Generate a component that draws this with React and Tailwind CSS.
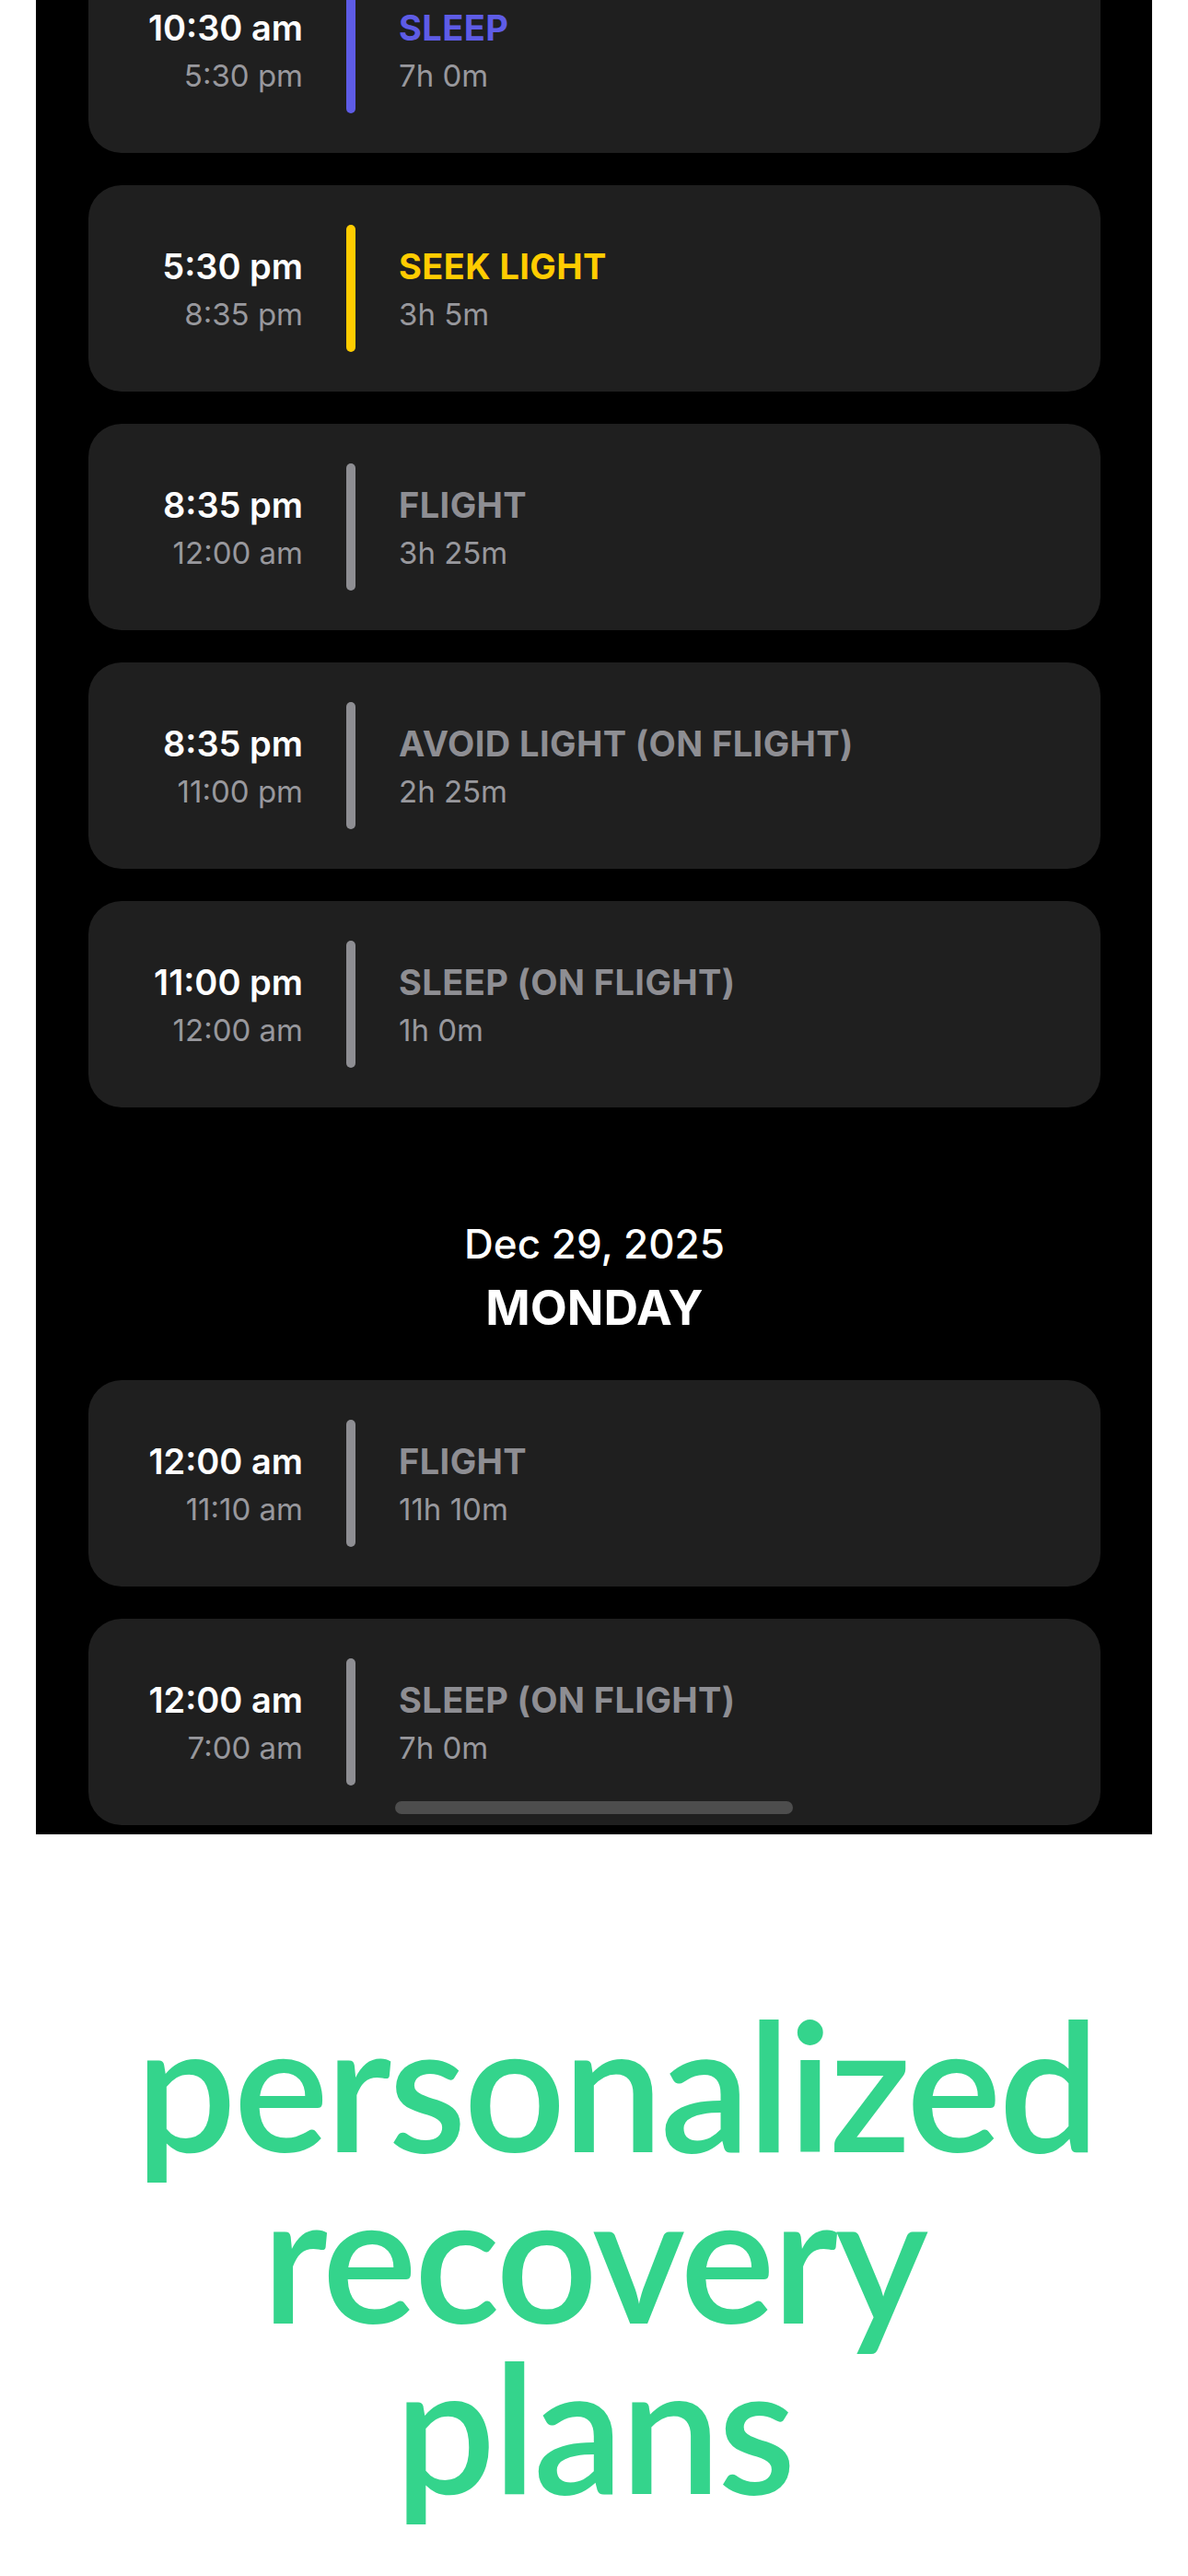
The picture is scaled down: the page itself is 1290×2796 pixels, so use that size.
const dayOne = [
  { start: "10:30 am", end: "5:30 pm", title: "SLEEP", length: "7h 0m", tone: "sleep" },
  { start: "5:30 pm", end: "8:35 pm", title: "SEEK LIGHT", length: "3h 5m", tone: "light" },
  { start: "8:35 pm", end: "12:00 am", title: "FLIGHT", length: "3h 25m", tone: "muted" },
  { start: "8:35 pm", end: "11:00 pm", title: "AVOID LIGHT (ON FLIGHT)", length: "2h 25m", tone: "muted" },
  { start: "11:00 pm", end: "12:00 am", title: "SLEEP (ON FLIGHT)", length: "1h 0m", tone: "muted" },
];

const dayTwo = [
  { start: "12:00 am", end: "11:10 am", title: "FLIGHT", length: "11h 10m", tone: "muted" },
  { start: "12:00 am", end: "7:00 am", title: "SLEEP (ON FLIGHT)", length: "7h 0m", tone: "muted" },
];

const barColors = {
  sleep: "bg-[#5e5ce6]",
  light: "bg-[#ffcc00]",
  muted: "bg-[#8e8e93]",
};

const titleColors = {
  sleep: "text-[#5e5ce6]",
  light: "text-[#ffcc00]",
  muted: "text-[#8e8e93]",
};

function EventCard({ item }) {
  return (
    <div className="flex h-[224px] shrink-0 items-center gap-[47px] rounded-[36px] bg-[#1f1f1f]">
      {/* start / end */}
      <div className="w-[233px] pt-[3px] text-right">
        <div className="text-[38px] font-semibold leading-[52px] text-white">{item.start}</div>
        <div className="text-[33px] leading-[52px] text-[#98989d]">{item.end}</div>
      </div>

      <div className={`h-[138px] w-[10px] rounded-full ${barColors[item.tone]}`} />

      <div className="pt-[3px]">
        <div className={`text-[38px] font-bold leading-[52px] tracking-[0.4px] ${titleColors[item.tone]}`}>
          {item.title}
        </div>
        <div className="text-[33px] leading-[52px] text-[#98989d]">{item.length}</div>
      </div>
    </div>
  );
}

export default function App() {
  return (
    <div className="min-h-[2796px] w-[1290px] bg-white" style={{ fontFamily: "Inter, 'Noto Sans', sans-serif" }}>
      {/* Phone screen */}
      <div className="relative ml-[39px] h-[1991px] w-[1212px] overflow-hidden bg-black">
        <div className="-mt-[58px] flex flex-col gap-[35px] pl-[57px] pr-[56px]">
          {dayOne.map((item, i) => (
            <EventCard key={i} item={item} />
          ))}

          <div className="pt-[88px] pb-[12px] text-center text-white">
            <div className="text-[44px] font-medium leading-[50px]">Dec 29, 2025</div>
            <div className="mt-[14px] text-[52px] font-bold leading-[62px]">MONDAY</div>
          </div>

          {dayTwo.map((item, i) => (
            <EventCard key={i} item={item} />
          ))}
        </div>

        {/* scroll indicator */}
        <div className="absolute bottom-[22px] left-1/2 h-[14px] w-[432px] -translate-x-1/2 rounded-full bg-[#4d4d4d]" />
      </div>

      {/* Caption */}
      <div
        className="mt-[178px] text-center text-[194px] font-semibold leading-[185.5px] tracking-[-3px] text-[#34d48c]"
        style={{ fontFamily: "Lato, 'Noto Sans', sans-serif" }}
      >
        <span className="inline-block pl-[48px]">personalized</span>
        <br />
        recovery
        <br />
        plans
      </div>
    </div>
  );
}
